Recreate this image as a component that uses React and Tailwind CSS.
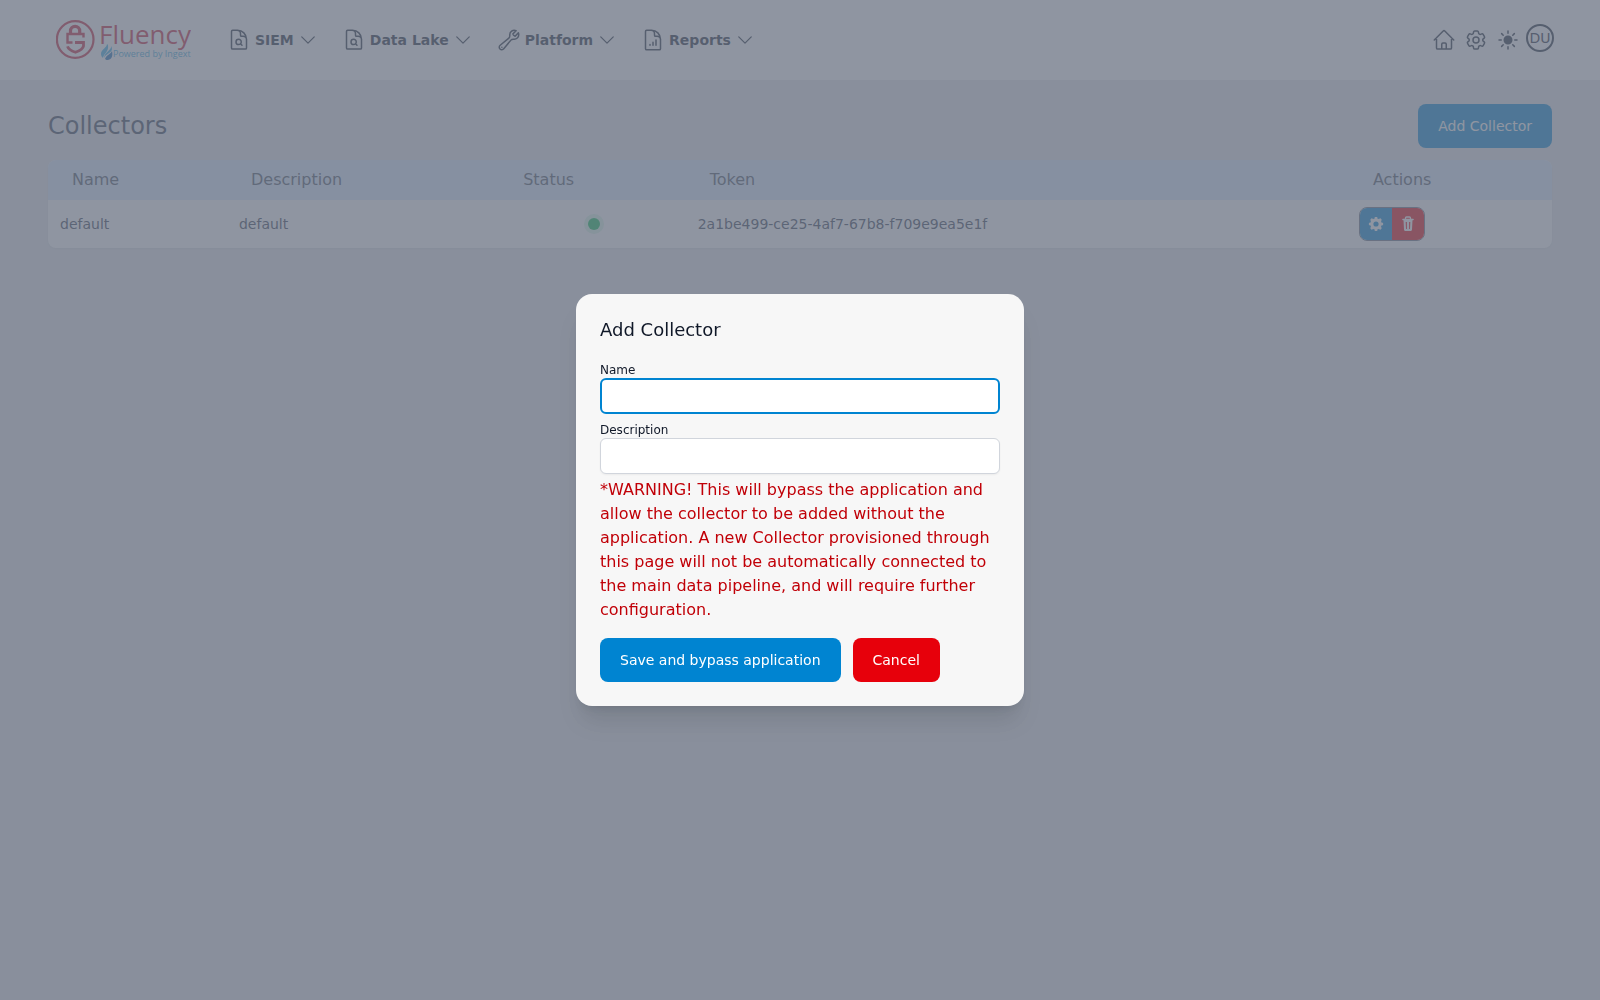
import {
  HiOutlineCog6Tooth,
  HiOutlineDocumentChartBar,
  HiOutlineDocumentMagnifyingGlass,
  HiOutlineHome,
  HiOutlineWrench,
  HiSun,
} from "react-icons/hi2";

const menus = [
  { label: "SIEM", icon: HiOutlineDocumentMagnifyingGlass },
  { label: "Data Lake", icon: HiOutlineDocumentMagnifyingGlass },
  { label: "Platform", icon: HiOutlineWrench },
  { label: "Reports", icon: HiOutlineDocumentChartBar },
];

const collectors = [
  {
    name: "default",
    description: "default",
    token: "2a1be499-ce25-4af7-67b8-f709e9ea5e1f",
  },
];

const teeth = [0, 45, 90, 135, 180, 225, 270, 315];

function Logo() {
  return (
    <svg width="135" height="48" viewBox="0 -2 135 48" role="img" aria-label="Fluency">
      <g fill="none" stroke="#c8203a">
        <circle cx="19.2" cy="21.500" r="18.300" strokeWidth="2.200" />
        <path d="M14.500 16v-3a4.600 4.600 0 0 1 9.200 0v3" strokeWidth="3.200" />
        <path d="M27.500 19.500V16H11.500v8.500h5" strokeWidth="2.400" />
        <path d="M19 24.500h8.500V28q-.5 3.500-8 6.300-7-2.500-8-6" strokeWidth="2.800" />
      </g>
      <text x="43" y="26" fill="#c8203a" className="font-['Open_Sans',sans-serif] text-[26px]">
        Fluency
      </text>
      <path d="M51 26c0 4-6 5-6 10 0 2 1 3 2 4 1-5 6-6 5-13z" fill="#38b0e6" />
      <path d="M55.500 28c-1 5-7 6-7.500 12 1-4 8-5 8-9z" fill="#38b0e6" />
      <path d="M56 33c-1 3-6 4-7 8 1 1 2 1 3 1 4-1 5-4 4-9z" fill="#1c6fb8" />
      <text x="57" y="39" fill="#38a9dc" className="font-['Open_Sans',sans-serif] text-[9px]">
        Powered by Ingext
      </text>
    </svg>
  );
}

function ChevronDown() {
  return (
    <svg className="size-5" viewBox="0 0 24 24" fill="none" stroke="currentColor" strokeWidth="1.5">
      <path strokeLinecap="round" strokeLinejoin="round" d="m19.500 8.250-7.500 7.500-7.500-7.500" />
    </svg>
  );
}

function GearIcon() {
  return (
    <svg className="size-4" viewBox="0 0 16 16" fill="none" stroke="currentColor">
      <circle cx="8" cy="8" r="4.200" strokeWidth="3.200" />
      {teeth.map((angle) => (
        <path key={angle} d="M8 .9V3.500" strokeWidth="2.600" transform={`rotate(${angle} 8 8)`} />
      ))}
    </svg>
  );
}

function TrashIcon() {
  return (
    <svg className="size-4" viewBox="0 0 16 16" fill="none" stroke="currentColor">
      <path d="M5.500 3V2q0-1 1-1h3q1 0 1 1v1" strokeWidth="1.300" />
      <path d="M3 3.500h10" strokeWidth="1.600" strokeLinecap="round" />
      <path
        d="M3.500 4h9l-.5 9.500q-.1 1.500-1.500 1.500h-5Q4.100 15 4 13.500zm2.200 2 .3 7h.9V6zm3.400 0v7h.9l.3-7z"
        fill="currentColor"
        fillRule="evenodd"
        stroke="none"
      />
    </svg>
  );
}

function Header() {
  return (
    <header className="flex h-20 items-center justify-between bg-white pr-[46px] pl-14 text-gray-800">
      <div className="flex items-center gap-9">
        <a href="#">
          <Logo />
        </a>
        <nav className="flex gap-6">
          {menus.map(({ label, icon: Icon }) => (
            <button key={label} type="button" className="flex items-center gap-1 text-sm font-bold">
              <Icon className="size-6" />
              {label}
              <ChevronDown />
            </button>
          ))}
        </nav>
      </div>
      <div className="flex items-center gap-1.5">
        <div className="flex items-center gap-2">
          <a href="#" aria-label="Home">
            <HiOutlineHome className="size-6" />
          </a>
          <button type="button" aria-label="Settings">
            <HiOutlineCog6Tooth className="size-6" />
          </button>
          <button type="button" aria-label="Theme">
            <HiSun className="size-6" />
          </button>
        </div>
        <button
          type="button"
          className="mb-1 flex size-7 items-center justify-center rounded-full border-2 border-gray-800 text-sm"
        >
          DU
        </button>
      </div>
    </header>
  );
}

function CollectorTable() {
  return (
    <div className="mt-3 overflow-hidden rounded-lg bg-white shadow-xs">
      <table className="w-full table-fixed text-left">
        <colgroup>
          <col className="w-[11.9%]" />
          <col className="w-[18.1%]" />
          <col className="w-[12.4%]" />
          <col className="w-[44.1%]" />
          <col />
        </colgroup>
        <thead className="bg-blue-100 text-gray-600">
          <tr className="h-10">
            <th className="px-6 font-normal">Name</th>
            <th className="px-6 font-normal">Description</th>
            <th className="px-6 font-normal">Status</th>
            <th className="px-6 font-normal">Token</th>
            <th className="px-6 font-normal">Actions</th>
          </tr>
        </thead>
        <tbody className="text-sm text-gray-700">
          {collectors.map((c) => (
            <tr key={c.token} className="h-12">
              <td className="px-3">{c.name}</td>
              <td className="px-3">{c.description}</td>
              <td className="pr-2 pl-3">
                <div className="mx-auto w-fit rounded-full bg-green-500/15 p-1">
                  <div className="size-3 rounded-full bg-[#08bd55]" />
                </div>
              </td>
              <td className="px-3">{c.token}</td>
              <td className="px-2.5">
                <div className="flex w-fit overflow-hidden rounded-lg border border-gray-500 text-white">
                  <button type="button" aria-label="Edit" className="bg-sky-600 p-2">
                    <GearIcon />
                  </button>
                  <button type="button" aria-label="Delete" className="bg-red-600 p-2">
                    <TrashIcon />
                  </button>
                </div>
              </td>
            </tr>
          ))}
        </tbody>
      </table>
    </div>
  );
}

function AddCollectorModal() {
  return (
    <div className="fixed inset-0 flex items-center justify-center bg-gray-500/75">
      <form
        role="dialog"
        aria-labelledby="modal-title"
        className="w-full max-w-md rounded-2xl bg-[#f7f7f7] p-6 text-gray-900 shadow-xl"
      >
        <h2 id="modal-title" className="text-lg leading-6">
          Add Collector
        </h2>
        <div className="mt-5 flex flex-col gap-2">
          <div>
            <label htmlFor="name" className="block text-xs">
              Name
            </label>
            <input
              id="name"
              type="text"
              className="block h-9 w-full rounded-md border-2 border-sky-600 bg-white px-3 text-sm outline-none"
            />
          </div>
          <div>
            <label htmlFor="description" className="block text-xs">
              Description
            </label>
            <input
              id="description"
              type="text"
              className="block h-9 w-full rounded-md border border-gray-300 bg-white px-3 text-sm shadow-xs outline-none"
            />
          </div>
        </div>
        <p className="mt-1 text-red-700">
          *WARNING! This will bypass the application and allow the collector to be added without the
          application. A new Collector provisioned through this page will not be automatically
          connected to the main data pipeline, and will require further configuration.
        </p>
        <div className="mt-4 flex gap-3 text-sm text-white">
          <button type="submit" className="rounded-lg bg-sky-600 px-5 py-3">
            Save and bypass application
          </button>
          <button type="button" className="rounded-lg bg-red-600 px-5 py-3">
            Cancel
          </button>
        </div>
      </form>
    </div>
  );
}

export default function App() {
  return (
    <div className="min-h-screen bg-gray-200 font-['DejaVu_Sans',sans-serif]">
      <Header />
      <main className="px-12 pt-6">
        <div className="flex items-center justify-between">
          <h1 className="text-2xl text-gray-700">Collectors</h1>
          <button type="button" className="rounded-lg bg-sky-600 px-5 py-3 text-sm text-white">
            Add Collector
          </button>
        </div>
        <CollectorTable />
      </main>
      <AddCollectorModal />
    </div>
  );
}
